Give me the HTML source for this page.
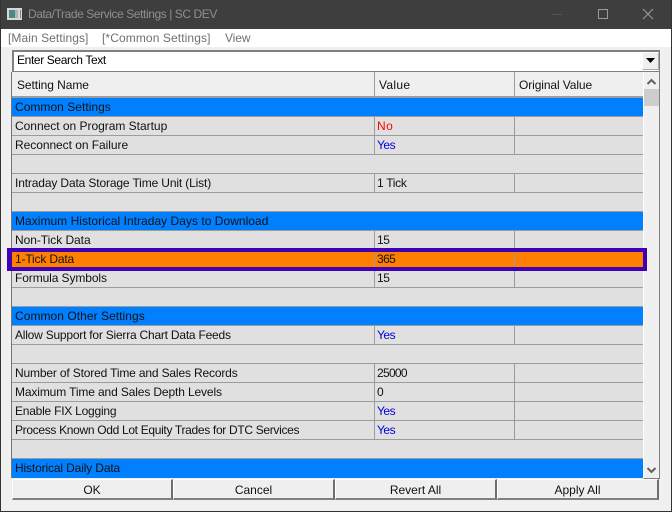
<!DOCTYPE html>
<html><head><meta charset="utf-8"><style>
html,body{margin:0;padding:0;background:#f0f0f0}
#w{position:relative;width:672px;height:512px;overflow:hidden;background:#f0f0f0;font:12px/19px "Liberation Sans",sans-serif;color:#111}
#w div{position:absolute;box-sizing:border-box;white-space:nowrap}
.r{left:12px;width:631px;height:19px;background:#e0e0e0;border-bottom:1px solid #9c9c9c}
.b{background:#0080ff}
.h{background:#ff8000}
.t{left:15px;height:19px;line-height:18px}
.v{left:377px;height:19px;line-height:18px}
.vl{width:1px;background:#9c9c9c}
.btn{top:479px;height:21px;background:#efefef;border-right:2px solid #6e6e6e;border-bottom:2px solid #808080;border-top:1px solid #fff;border-left:1px solid #fff;text-align:center;line-height:20px}
</style></head><body><div id="w">
<div style="left:0;top:0;width:672px;height:29px;background:#3e3e3e"></div>
<svg style="position:absolute;left:7px;top:8px" width="15" height="12"><rect width="15" height="12" fill="#d8d8d8"/><rect x="2" y="2" width="6" height="8" fill="#4a8a84"/><rect x="8" y="2" width="3" height="8" fill="#a8b8b8"/><rect x="13" y="2" width="1" height="8" fill="#888"/></svg>
<div style="left:28px;top:5px;color:#8f8f8f;height:19px;letter-spacing:-.42px">Data/Trade Service Settings | SC DEV</div>
<svg style="position:absolute;left:550px;top:5px" width="122" height="20" fill="none"><path d="M2 9.500h10" stroke="#555"/><path d="M48.500 4.500h9v9h-9z" stroke="#9a9a9a"/><path d="M93 4l10 10M103 4l-10 10" stroke="#9a9a9a" stroke-width="1.100"/></svg>
<div style="left:0;top:29px;width:672px;height:18px;background:#fff"></div>
<div style="left:0;top:0;width:1px;height:512px;background:#333"></div>
<div style="left:671px;top:0;width:1px;height:512px;background:#333"></div>
<div style="left:0;top:511px;width:672px;height:1px;background:#333"></div>
<div style="left:8px;top:29px;color:#707070;height:19px;letter-spacing:.07px">[Main Settings]</div>
<div style="left:102px;top:29px;color:#707070;height:19px;letter-spacing:.1px">[*Common Settings]</div>
<div style="left:225px;top:29px;color:#707070;height:19px;letter-spacing:-.1px">View</div>
<div style="left:12px;top:50px;width:648px;height:22px;background:#fff;border:1px solid #808080;border-top-width:2px;border-left-width:2px"></div>
<div style="left:17px;top:50px;height:20px;line-height:20px;color:#000;letter-spacing:-.37px">Enter Search Text</div>
<div style="left:642px;top:52px;width:17px;height:18px;background:#efefef;border:1px solid;border-color:#fff #aaa #aaa #fff"></div>
<svg style="position:absolute;left:646px;top:58px" width="10" height="6"><path d="M0 0h9L4.500 5z" fill="#000"/></svg>
<div style="left:12px;top:72px;width:631px;height:26px;background:#efefef;border-bottom:2px solid #9c9c9c"></div>
<div class="t" style="left:17px;top:76px;letter-spacing:-.07px">Setting Name</div><div class="v" style="left:379px;top:76px;letter-spacing:.3px">Value</div><div class="v" style="left:519px;top:76px;letter-spacing:-.1px">Original Value</div>
<div class="r b" style="top:98px"></div><div class="t" style="top:98px;letter-spacing:.03px">Common Settings</div>
<div class="r" style="top:117px"></div><div class="t" style="top:117px;letter-spacing:-.02px">Connect on Program Startup</div><div class="v" style="top:117px;color:#ff0000;letter-spacing:.5px">No</div>
<div class="r" style="top:136px"></div><div class="t" style="top:136px;letter-spacing:-.05px">Reconnect on Failure</div><div class="v" style="top:136px;color:#0000e0;letter-spacing:-.5px">Yes</div>
<div class="r" style="top:155px"></div>
<div class="r" style="top:174px"></div><div class="t" style="top:174px;letter-spacing:-.14px">Intraday Data Storage Time Unit (List)</div><div class="v" style="top:174px;letter-spacing:-.3px">1 Tick</div>
<div class="r" style="top:193px"></div>
<div class="r b" style="top:212px"></div><div class="t" style="top:212px;letter-spacing:.03px">Maximum Historical Intraday Days to Download</div>
<div class="r" style="top:231px"></div><div class="t" style="top:231px;letter-spacing:-.05px">Non-Tick Data</div><div class="v" style="top:231px;letter-spacing:-.4px">15</div>
<div class="r h" style="top:250px"></div><div class="t" style="top:250px;letter-spacing:-.17px">1-Tick Data</div><div class="v" style="top:250px;letter-spacing:-.6px">365</div>
<div class="r" style="top:269px"></div><div class="t" style="top:269px;letter-spacing:-.1px">Formula Symbols</div><div class="v" style="top:269px;letter-spacing:-.4px">15</div>
<div class="r" style="top:288px"></div>
<div class="r b" style="top:307px"></div><div class="t" style="top:307px;letter-spacing:.05px">Common Other Settings</div>
<div class="r" style="top:326px"></div><div class="t" style="top:326px;letter-spacing:-.22px">Allow Support for Sierra Chart Data Feeds</div><div class="v" style="top:326px;color:#0000e0;letter-spacing:-.5px">Yes</div>
<div class="r" style="top:345px"></div>
<div class="r" style="top:364px"></div><div class="t" style="top:364px;letter-spacing:-.16px">Number of Stored Time and Sales Records</div><div class="v" style="top:364px;letter-spacing:-.7px">25000</div>
<div class="r" style="top:383px"></div><div class="t" style="top:383px;letter-spacing:-.13px">Maximum Time and Sales Depth Levels</div><div class="v" style="top:383px;letter-spacing:-.4px">0</div>
<div class="r" style="top:402px"></div><div class="t" style="top:402px;letter-spacing:-.23px">Enable FIX Logging</div><div class="v" style="top:402px;color:#0000e0;letter-spacing:-.5px">Yes</div>
<div class="r" style="top:421px"></div><div class="t" style="top:421px;letter-spacing:-.32px">Process Known Odd Lot Equity Trades for DTC Services</div><div class="v" style="top:421px;color:#0000e0;letter-spacing:-.5px">Yes</div>
<div class="r" style="top:440px"></div>
<div class="r b" style="top:459px;height:19px;border-bottom:0"></div><div class="t" style="top:459px;letter-spacing:-.14px">Historical Daily Data</div>
<div class="vl" style="left:374px;top:72px;height:25px"></div><div class="vl" style="left:514px;top:72px;height:25px"></div>
<div class="vl" style="left:374px;top:117px;height:38px"></div><div class="vl" style="left:514px;top:117px;height:38px"></div>
<div class="vl" style="left:374px;top:174px;height:19px"></div><div class="vl" style="left:514px;top:174px;height:19px"></div>
<div class="vl" style="left:374px;top:231px;height:57px"></div><div class="vl" style="left:514px;top:231px;height:57px"></div>
<div class="vl" style="left:374px;top:326px;height:19px"></div><div class="vl" style="left:514px;top:326px;height:19px"></div>
<div class="vl" style="left:374px;top:364px;height:76px"></div><div class="vl" style="left:514px;top:364px;height:76px"></div>
<div style="left:11px;top:72px;width:1px;height:406px;background:#777"></div>
<div style="left:643px;top:72px;width:17px;height:407px;background:#f0f0f0;border:solid #808080;border-width:0 1px 1px 0;border-left:1px solid #fff"></div>
<div style="left:644px;top:89px;width:15px;height:17px;background:#cdcdcd"></div>
<svg style="position:absolute;left:646px;top:78px" width="12" height="8" fill="none"><path d="M1.500 6L5.500 2L9.500 6" stroke="#606060" stroke-width="2"/></svg>
<svg style="position:absolute;left:646px;top:466px" width="12" height="8" fill="none"><path d="M1.500 2L5.500 6L9.500 2" stroke="#606060" stroke-width="2"/></svg>
<div style="left:7px;top:248px;width:640px;height:23px;border:4px solid #3f00b4;border-left-width:5px"></div>
<div class="btn" style="left:12px;width:161px">OK</div>
<div class="btn" style="left:173px;width:162px">Cancel</div>
<div class="btn" style="left:335px;width:162px">Revert All</div>
<div class="btn" style="left:497px;width:162px">Apply All</div>
</div></body></html>
